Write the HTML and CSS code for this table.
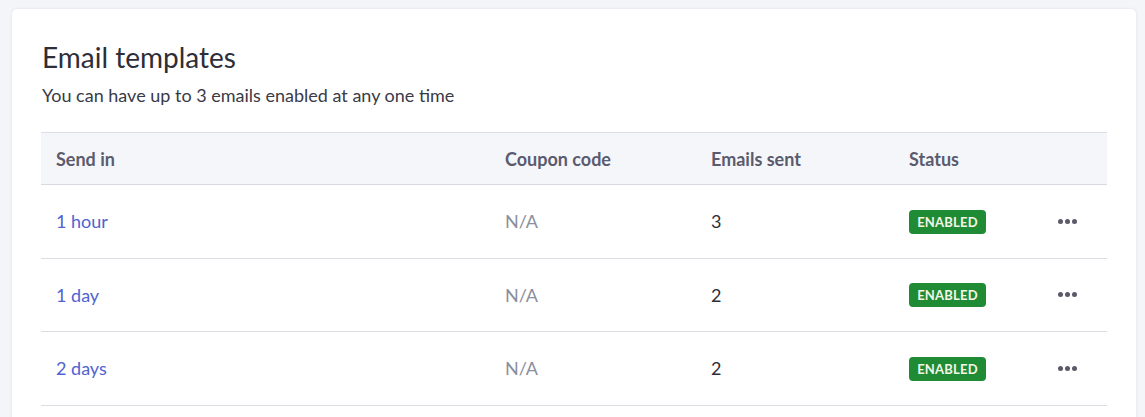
FILE: index.html
```html
<!DOCTYPE html>
<html>
<head>
<meta charset="utf-8">
<link rel="stylesheet" href="styles.css">
</head>
<body>
<div class="page">
  <section class="card">
    <h1 class="title">Email templates</h1>
    <p class="subtitle">You can have up to 3 emails enabled at any one time</p>
    <div class="table">
      <div class="row head">
        <div class="cell">Send in</div>
        <div class="cell">Coupon code</div>
        <div class="cell">Emails sent</div>
        <div class="cell">Status</div>
        <div class="cell"></div>
      </div>
      <div class="row">
        <div class="cell"><a class="link" href="#">1 hour</a></div>
        <div class="cell muted">N/A</div>
        <div class="cell">3</div>
        <div class="cell"><span class="badge">ENABLED</span></div>
        <div class="cell actions"><span class="dots"><i></i><i></i><i></i></span></div>
      </div>
      <div class="row">
        <div class="cell"><a class="link" href="#">1 day</a></div>
        <div class="cell muted">N/A</div>
        <div class="cell">2</div>
        <div class="cell"><span class="badge">ENABLED</span></div>
        <div class="cell actions"><span class="dots"><i></i><i></i><i></i></span></div>
      </div>
      <div class="row">
        <div class="cell"><a class="link" href="#">2 days</a></div>
        <div class="cell muted">N/A</div>
        <div class="cell">2</div>
        <div class="cell"><span class="badge">ENABLED</span></div>
        <div class="cell actions"><span class="dots"><i></i><i></i><i></i></span></div>
      </div>
    </div>
  </section>
</div>
</body>
</html>
```
FILE: styles.css
```css
html, body {
  margin: 0;
  padding: 0;
  background: #f4f5f9;
  font-family: "Lato", "Noto Sans", sans-serif;
  color: #2e2e38;
}
.page {
  padding: 9px 9px 0 12px;
}
.card {
  background: #ffffff;
  border-radius: 5px;
  box-shadow: 0 0 3px rgba(30, 30, 60, 0.10);
  padding: 32px 29px 0 29px;
  height: 420px;
  box-sizing: border-box;
}
.title {
  margin: 0;
  font-size: 28px;
  font-weight: 400;
  line-height: 32px;
  color: #2e2e38;
  padding-left: 1px;
}
.subtitle {
  margin: 10px 0 0 0;
  font-size: 18px;
  line-height: 24px;
  color: #3a3a46;
  padding-left: 1px;
}
.table {
  margin-top: 25px;
}
.row {
  display: grid;
  grid-template-columns: 449px 206px 198px 149px 1fr;
  align-items: center;
  height: 72.5px;
  border-bottom: 1px solid #dcdde3;
  font-size: 18px;
}
.row.head {
  height: 51px;
  background: #f5f6fa;
  border-top: 1px solid #dcdde6;
  border-bottom: 1px solid #d8d9e3;
  font-weight: 700;
  color: #5b5b6e;
}
.cell {
  padding-left: 15px;
}
.link {
  color: #4f63d2;
  text-decoration: none;
}
.muted {
  color: #8b8e9c;
}
.badge {
  display: inline-block;
  box-sizing: border-box;
  width: 77px;
  text-align: center;
  background: #1f8b35;
  color: #f4f6e6;
  font-size: 13px;
  font-weight: 700;
  letter-spacing: 0.2px;
  line-height: 24px;
  height: 24px;
  border-radius: 4px;
}
.actions {
  padding-left: 0;
  display: flex;
}
.dots {
  display: flex;
  gap: 2px;
  margin-left: 15px;
}
.dots i {
  width: 5px;
  height: 5px;
  border-radius: 50%;
  background: #5a5a6a;
}
```
